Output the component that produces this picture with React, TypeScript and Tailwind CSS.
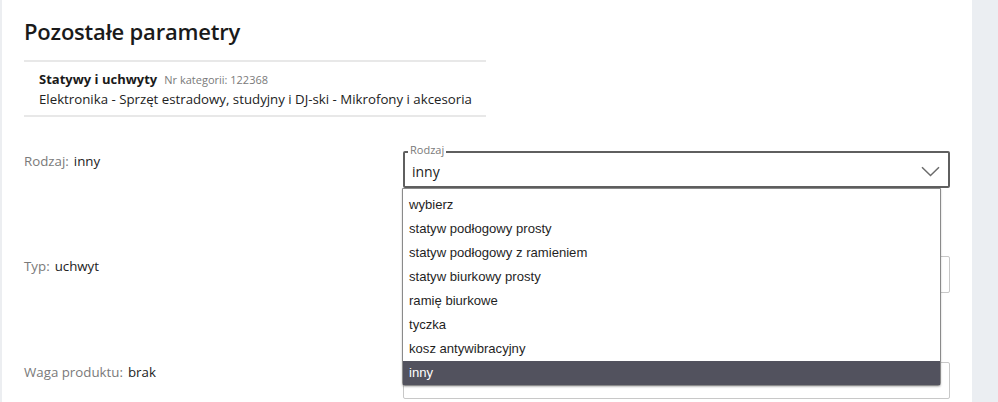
import React from 'react'

const options = [
  'wybierz',
  'statyw podłogowy prosty',
  'statyw podłogowy z ramieniem',
  'statyw biurkowy prosty',
  'ramię biurkowe',
  'tyczka',
  'kosz antywibracyjny',
  'inny',
]

function Chevron() {
  return (
    <svg width="19" height="11" viewBox="0 0 19 11" fill="none" className="text-[#6b6b6b]">
      <path d="M1 1.2 L9.5 9.5 L18 1.2" stroke="currentColor" strokeWidth="1.5" />
    </svg>
  )
}

function Row({
  label,
  value,
  height,
  children,
}: {
  label: string
  value: string
  height: string
  children: React.ReactNode
}) {
  return (
    <div className={`flex ${height}`}>
      <div className="w-[379px] text-[13.3px] leading-[20px]">
        <span className="text-[#7a7a7a]">{label}:</span>
        <span className="ml-[5px] text-[#222]">{value}</span>
      </div>
      <div className="w-[547px]">{children}</div>
    </div>
  )
}

export default function App() {
  return (
    <div className="flex h-[402px] w-[998px] overflow-hidden bg-white font-['Open_Sans',sans-serif]">
      <div className="w-[972px] border-l-2 border-[#eceef1] pl-[22px]">
        <h1 className="mt-[16px] text-[22px] leading-[30px] font-semibold tracking-[-0.2px] text-[#1a1a1a]">
          Pozostałe parametry
        </h1>
        <div className="mt-[14px] w-[462px] border-y-2 border-[#e8e8e8] px-[15px] pt-[8px] pb-[6px] whitespace-nowrap">
          <div className="flex items-baseline leading-[19px]">
            <span className="text-[13px] font-bold text-[#1a1a1a]">Statywy i uchwyty</span>
            <span className="ml-[7px] text-[11px] text-[#7a7a7a]">Nr kategorii: 122368</span>
          </div>
          <div className="mt-[1px] text-[13.25px] leading-[19px] text-[#222]">
            Elektronika - Sprzęt estradowy, studyjny i DJ-ski - Mikrofony i akcesoria
          </div>
        </div>

        <div className="mt-[34px]">
          <Row label="Rodzaj" value="inny" height="h-[105px]">
            <div className="relative">
              <div className="flex h-[37px] items-center justify-between rounded-[2px] border-2 border-[#5f5f5f] pt-[3px] pr-[8px] pl-[7px]">
                <span className="text-[14px] text-[#222]">inny</span>
                <Chevron />
              </div>
              <span className="absolute top-[-7px] left-[5px] bg-white px-[2px] text-[11px] leading-[12px] text-[#7a7a7a]">
                Rodzaj
              </span>
              <ul className="absolute top-[37px] left-[-1px] z-10 w-[539px] rounded-b-[3px] border border-[#8a8a8a] bg-white pt-[4px] font-['Liberation_Sans',Arial,sans-serif] text-[13.1px] text-[#1f1f1f] shadow-[0_1px_2px_rgba(0,0,0,0.25)]">
                {options.map(o => (
                  <li
                    key={o}
                    className={
                      o === 'inny'
                        ? 'h-[24px] px-[6px] leading-[24px] bg-[#52525e] text-white'
                        : 'h-[24px] px-[6px] leading-[24px]'
                    }
                  >
                    {o}
                  </li>
                ))}
              </ul>
            </div>
          </Row>
          <Row label="Typ" value="uchwyt" height="h-[106px]">
            <div className="h-[37px] rounded-[2px] border border-[#c8c8c8]" />
          </Row>
          <Row label="Waga produktu" value="brak" height="h-[106px]">
            <div className="h-[37px] rounded-[2px] border border-[#c8c8c8]" />
          </Row>
        </div>
      </div>
      <div className="flex-1 bg-[#ebeef2]" />
    </div>
  )
}
